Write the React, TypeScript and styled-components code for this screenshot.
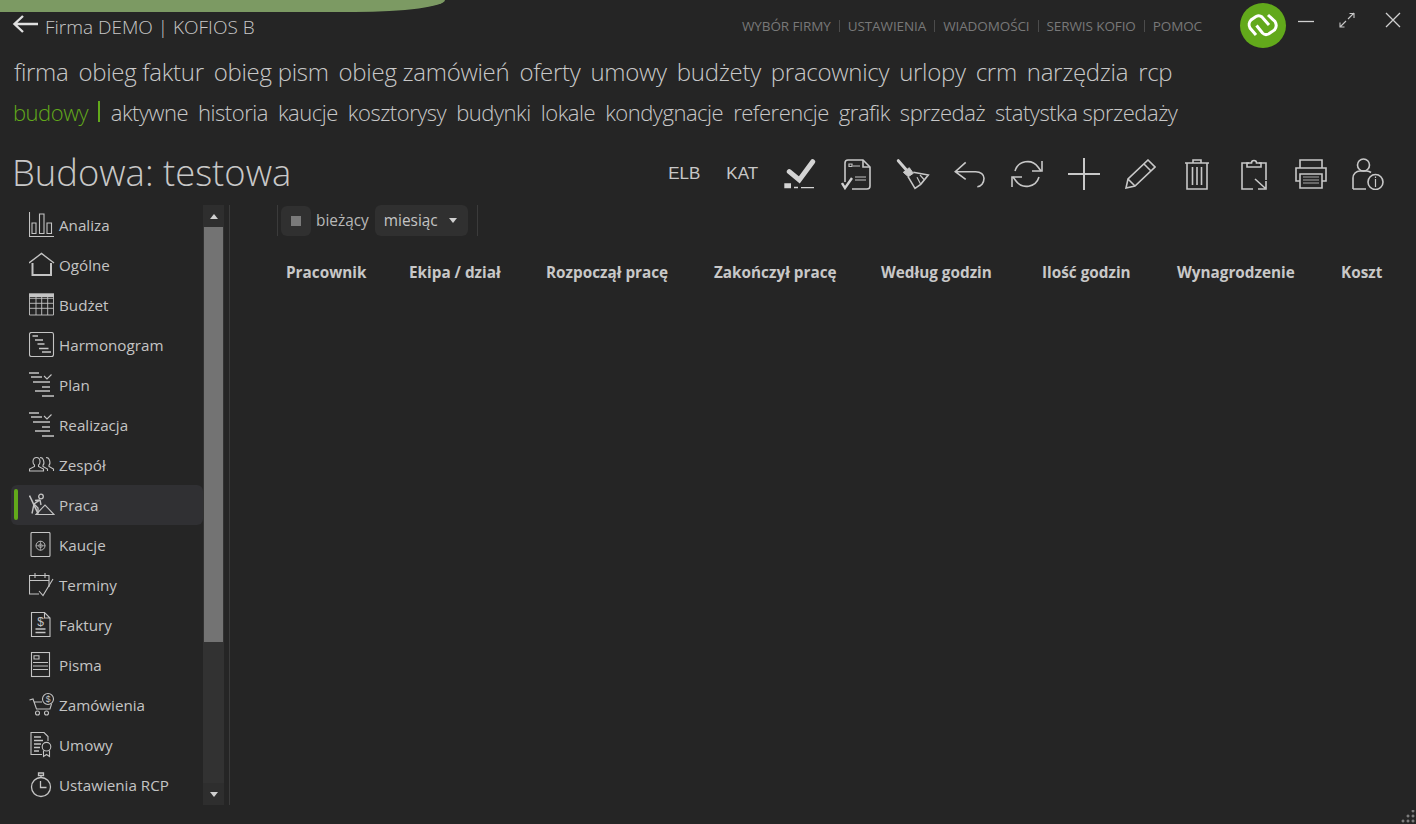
import React from "react";
import styled, { createGlobalStyle } from "styled-components";

const Global = createGlobalStyle`
  html, body {
    margin: 0;
    padding: 0;
    background: #252525;
  }
  * { box-sizing: border-box; }
`;

const Shell = styled.div`
  position: relative;
  width: 1416px;
  height: 824px;
  overflow: hidden;
  background: #252525;
  color: #c4c4c4;
  font-family: "Open Sans", "Noto Sans", sans-serif;
`;

const TopArc = styled.div`
  position: absolute;
  left: -40px;
  top: -60px;
  width: 485px;
  height: 72px;
  background: #7c9a63;
  border-bottom-right-radius: 90px 12px;
`;

const Header = styled.header`
  display: flex;
  align-items: flex-start;
  height: 51px;
  padding: 3px 15px 0 12px;
`;

const Brand = styled.div`
  display: flex;
  align-items: center;
  gap: 7px;
  height: 48px;
  font-size: 19px;
  font-weight: 300;
  color: #c8c8c8;
  flex: 1;
`;

const TopLinks = styled.nav`
  display: flex;
  align-items: center;
  height: 46px;
  font-size: 13.5px;
  letter-spacing: -0.1px;
  color: #787878;
  font-weight: 400;
`;

const TopLink = styled.span`
  white-space: nowrap;
`;

const TopSep = styled.span`
  width: 1px;
  height: 12px;
  background: #4c4c4c;
  margin: 0 8px;
`;

const Logo = styled.div`
  width: 46px;
  height: 45px;
  margin-left: 38px;
  border-radius: 50%;
  background: #62a91b;
`;

const WindowButtons = styled.div`
  display: flex;
  align-items: flex-start;
  margin-left: 12px;
  gap: 25px;
  padding-top: 9px;

  & > svg:last-child {
    margin-left: 5px;
  }
`;

const MenuRow = styled.nav<{ $size: number; $spacing: number; $height: number }>`
  display: flex;
  align-items: center;
  gap: 10px;
  height: ${(p) => p.$height}px;
  padding-left: 14px;
  font-size: ${(p) => p.$size}px;
  font-weight: 300;
  letter-spacing: ${(p) => p.$spacing}px;
  color: #c8c8c8;
  white-space: nowrap;
`;

const Section = styled.span`
  display: flex;
  align-items: center;
  color: #62a91b;
  margin-left: -1px;
  margin-right: 1px;
`;

const SectionBar = styled.span`
  width: 1.5px;
  height: 21px;
  background: #62a91b;
  margin-left: 10px;
`;

const TitleRow = styled.div`
  display: flex;
  align-items: center;
  height: 56px;
  margin: 12px 0 5px;
  padding-left: 12px;
`;

const Title = styled.h1`
  flex: 1;
  margin: 0;
  font-size: 36.4px;
  font-weight: 300;
  color: #c8c8c8;
`;

const Toolbar = styled.div`
  display: flex;
  align-items: center;
  padding-right: 20px;
  padding-top: 4px;
`;

const ToolText = styled.span`
  width: 58px;
  text-align: center;
  font-family: "Liberation Sans", sans-serif;
  font-size: 17px;
  color: #c8c8c8;
`;

const ToolIcon = styled.span`
  width: 56.8px;
  height: 34px;
  display: flex;
  align-items: center;
  justify-content: center;
`;

const Body = styled.div`
  display: flex;
  height: 600px;
`;

const Sidebar = styled.aside`
  display: flex;
  width: 230px;
  padding-left: 11px;
  border-right: 1px solid #3b3b3b;
  margin-right: 47px;
`;

const SideList = styled.ul`
  list-style: none;
  margin: 0;
  padding: 0;
  width: 192px;
`;

const SideItem = styled.li<{ $active?: boolean }>`
  position: relative;
  display: flex;
  align-items: center;
  gap: 4px;
  height: 40px;
  padding-left: 18px;
  font-size: 15.2px;
  color: #c4c4c4;
  border-radius: 6px;
  background: ${(p) => (p.$active ? "#303033" : "transparent")};
`;

const ActiveMark = styled.span`
  position: absolute;
  left: 3px;
  top: 4px;
  width: 4px;
  height: 31px;
  border-radius: 2px;
  background: #62a91b;
`;

const Scrollbar = styled.div`
  display: flex;
  flex-direction: column;
  width: 21px;
  background: #323232;
`;

const ScrollBtn = styled.div`
  height: 22px;
  display: flex;
  align-items: center;
  justify-content: center;
  background: #2e2e2e;
`;

const ScrollThumb = styled.div`
  height: 415px;
  width: 19px;
  margin-left: 1px;
  background: #737373;
`;

const ScrollRest = styled.div`
  flex: 1;
`;

const Arrow = styled.span<{ $up?: boolean }>`
  width: 0;
  height: 0;
  border-left: 4.5px solid transparent;
  border-right: 4.5px solid transparent;
  ${(p) =>
    p.$up
      ? "border-bottom: 5px solid #d0d0d0;"
      : "border-top: 5px solid #d0d0d0;"}
`;

const Main = styled.main`
  flex: 1;
  display: flex;
  flex-direction: column;
`;

const Filters = styled.div`
  display: flex;
  align-items: center;
  height: 31px;
  font-size: 15.4px;
  color: #b8b8b8;
`;

const FilterSep = styled.span`
  width: 1px;
  height: 31px;
  background: #3b3b3b;
`;

const StopButton = styled.span`
  width: 30px;
  height: 30px;
  margin: 1px 5px 0 3px;
  border-radius: 6px;
  background: #303030;
  display: flex;
  align-items: center;
  justify-content: center;
`;

const StopMark = styled.span`
  width: 10px;
  height: 10px;
  background: #7a7a7a;
`;

const Select = styled.span`
  display: flex;
  align-items: center;
  justify-content: space-between;
  width: 93px;
  height: 31px;
  margin: 0 9px 0 6px;
  padding: 0 11px 0 9px;
  border-radius: 6px;
  background: #303030;
  color: #c4c4c4;
`;

const TableHead = styled.div`
  display: grid;
  grid-template-columns: 123px 137px 168px 167px 161px 135px 164px auto;
  margin-top: 24px;
  padding-left: 9px;
  font-size: 15.3px;
  font-weight: 700;
  line-height: 24px;
  color: #c8c8c8;
  white-space: nowrap;
`;

const Grip = styled.svg`
  position: absolute;
  right: 0;
  bottom: 0;
`;

const line = { fill: "none", stroke: "#c8c8c8", strokeWidth: 1.6 };
const thin = { fill: "none", stroke: "#c4c4c4", strokeWidth: 1.2 };

const BackArrow = () => (
  <svg width="26" height="20" viewBox="0 0 26 20" style={{ marginTop: -6 }}>
    <path d="M26 10H3M11 2L2.500 10l8.500 8" fill="none" stroke="#e0e0e0" strokeWidth="2.400" />
  </svg>
);

const LogoMark = () => (
  <svg width="46" height="45" viewBox="0 0 46 45">
    <g fill="none" stroke="#fff" strokeWidth="3">
      <path d="M16 32l-6-7c-1.500-2.500-1-6 1-8l5-3.500c2-1 4.500-.8 6 .5l7 8" />
      <path d="M28 12l7 6.500c1.500 2.500 1.500 6-.5 8.500l-6 4c-2 1-4.500 .5-6-1l-6-7.500" />
    </g>
  </svg>
);

const MinimizeIcon = () => (
  <svg width="16" height="18" viewBox="0 0 16 18">
    <path d="M0 9.500h16" stroke="#d0d0d0" strokeWidth="1.300" />
  </svg>
);

const ExpandIcon = () => (
  <svg width="16" height="16" viewBox="0 0 16 16">
    <g fill="none" stroke="#c8c8c8" strokeWidth="1.100">
      <path d="M9 7l6-6M10.500 1.500h4.500V6" />
      <path d="M7 9l-6 6M1 10.500V15h4.500" />
    </g>
  </svg>
);

const CloseIcon = () => (
  <svg width="16" height="16" viewBox="0 0 16 16">
    <path d="M1 1l14 14M15 1L1 15" stroke="#d0d0d0" strokeWidth="1.300" />
  </svg>
);

const tools = [
  // zaznacz
  <svg key="check" width="32" height="32" viewBox="0 0 32 32">
    <path d="M5.300 13.700l10 8.300L28.700 3.700" fill="none" stroke="#d4d4d4" strokeWidth="5" strokeLinecap="round" />
    <path d="M0.300 25.300H7v5H0.300zM10 28.700h4v1.600h-4zM17 29h13v1.300h-13z" fill="#d4d4d4" />
  </svg>,
  // dokument z ptaszkiem
  <svg key="doc" width="32" height="32" viewBox="0 0 32 32" style={{ marginLeft: 2 }}>
    <path d="M4 24V5a3 3 0 0 1 3-3h15l7 7v19a3 3 0 0 1-3 3H11" {...line} />
    <path d="M22 2v7h7" {...line} />
    <path d="M8 6h3v2.500H8zM12 8h7M14 19h11M14 22h11" {...thin} />
    <path d="M1 25l3 5 7-10" fill="none" stroke="#d0d0d0" strokeWidth="2.400" />
  </svg>,
  // miotla
  <svg key="broom" width="34" height="32" viewBox="0 0 34 32">
    <path d="M2.300 2.700l9 10.300" fill="none" stroke="#d0d0d0" strokeWidth="3" strokeLinecap="round" />
    <path d="M7.300 14.300l6-4.600 4 5.600-5 3.400z" fill="#c8c8c8" stroke="#c8c8c8" strokeWidth="1" />
    <path d="M12 18.700l7 11.600 5.700-4 7.600-9.300-15-2.700" {...line} />
    <path d="M24.700 26.300l-3.700-7M28.500 22l-4.500-5" {...thin} />
  </svg>,
  // cofnij
  <svg key="undo" width="32" height="28" viewBox="0 0 32 28">
    <path d="M11.700 2.300L1.300 11.700l10.400 7.600M1.300 11.700h20.400c5 0 8.300 2.800 8.300 6.600 0 4.700-3 8.400-6.700 8.400" {...line} />
  </svg>,
  // odswiez
  <svg key="refresh" width="32" height="30" viewBox="0 0 32 30">
    <path d="M4 12A13 13 0 0 1 27 8l3 4M28 18A13 13 0 0 1 5 22l-3-4" {...line} />
    <path d="M31 2v10H21M1 28V18h10" {...line} />
  </svg>,
  // dodaj
  <svg key="plus" width="32" height="32" viewBox="0 0 32 32">
    <path d="M0 16h32M16 0v32" fill="none" stroke="#c8c8c8" strokeWidth="2" />
  </svg>,
  // edytuj
  <svg key="pencil" width="32" height="30" viewBox="0 0 32 30">
    <path d="M24 1l7 7L11 27l-9 2 2-9zM4 20l7 7M20 5l7 7" {...line} />
  </svg>,
  // usun
  <svg key="trash" width="24" height="31" viewBox="0 0 24 31">
    <path d="M0 4h24M8 4V1h8v3M2 4v26h20V4M7.500 8v18M12 8v18M16.500 8v18" {...line} />
  </svg>,
  // wklej
  <svg key="paste" width="26" height="32" viewBox="0 0 26 32">
    <path d="M8 5H1v26h11M18 5h7v17" {...line} />
    <path d="M6 9V5h4.500a2.500 2.500 0 0 1 5 0H20v4z" {...line} />
    <path d="M14 21l10 9M25 23v8h-8" {...line} />
  </svg>,
  // drukuj
  <svg key="print" width="32" height="30" viewBox="0 0 32 30">
    <path d="M5 9V1h22v8" {...line} />
    <path d="M5 22H1V9h30v13h-4" {...line} />
    <path d="M5 15h22v14H5z" {...line} />
    <path d="M8 18h16M8 21h16M8 24h16" fill="none" stroke="#aaa" strokeWidth="1.200" />
  </svg>,
  // profil info
  <svg key="info" width="32" height="32" viewBox="0 0 32 32">
    <circle cx="11.500" cy="7" r="6" {...line} />
    <path d="M1 31V20a7 7 0 0 1 7-7h7a7 7 0 0 1 4 1.500M1 31h13" {...line} />
    <circle cx="23.500" cy="24" r="7.500" {...line} />
    <path d="M23.500 21v8M23.500 18.500v1.500" fill="none" stroke="#c8c8c8" strokeWidth="1.200" />
  </svg>,
];

const S = ({ children }: { children: React.ReactNode }) => (
  <svg width="26" height="26" viewBox="0 0 26 26" style={{ flexShrink: 0 }}>
    {children}
  </svg>
);

const si = { fill: "none", stroke: "#c4c4c4", strokeWidth: 1.1 };

const Plan = () => (
  <S>
    <path d="M0 1h10M2 5h11M4 10h17M13 15h8M6 19h15M13 24h12" {...si} strokeWidth={1.300} />
    <path d="M15 4l3 3 4.500-4.500" {...si} />
  </S>
);

const sideIcons: Record<string, React.ReactNode> = {
  Analiza: (
    <S>
      <path d="M0.500 0v24.500H25M3 11h4v10.500H3zM10.500 2H15v19.500h-4.500zM18 11h4.500v10.500H18z" {...si} />
    </S>
  ),
  "Ogólne": (
    <S>
      <path d="M0 11L12.500 1.500 25 11" {...si} strokeWidth={1.400} />
      <path d="M3.500 11v12H22V11" {...si} strokeWidth={2} />
    </S>
  ),
  "Budżet": (
    <S>
      <path d="M0 1.300h25V5H0z" fill="#c4c4c4" />
      <path d="M0.500 5v18h24V5M0.500 6.300h24M0.500 11.300h24M0.500 16.300h24M7 5v18M12.700 5v18M18.700 5v18" {...si} strokeWidth={0.900} />
    </S>
  ),
  Harmonogram: (
    <S>
      <rect x="0.500" y="0.500" width="24" height="24" rx="2" {...si} />
      <path d="M3.500 4H9M6 8h8M8.500 12h7M10 16.500h9.500M13 20h9" {...si} strokeWidth={1.400} />
    </S>
  ),
  Plan: <Plan />,
  Realizacja: <Plan />,
  Zespół: (
    <S>
      <path d="M0.500 19v-2l5-2.500V13c-2-1-2.500-7.500 2-7.500s4 6.500 2 7.500v1.500l5 2.500v2z" {...si} />
      <path d="M11 5.700c3.500-1 5 5.500 3 7.500v1.300l4.500 2.500V19" {...si} />
      <path d="M17 5.700c3.500-1 5 5.500 3 7.500v1.300l4.500 2.500V19" {...si} />
    </S>
  ),
  Praca: (
    <S>
      <circle cx="12" cy="4.500" r="2.300" {...si} strokeWidth={1.300} />
      <path d="M0.500 3.500L9 21.500" {...si} strokeWidth={1.600} />
      <path d="M11 8L5 12l-2 9.500M11 8l-5 .5M5 12l4 4v5.500M11 8l1 5" {...si} strokeWidth={1.400} />
      <path d="M7 22.500L16 13l9 9.500z" {...si} />
    </S>
  ),
  Kaucje: (
    <S>
      <rect x="2" y="0.500" width="19" height="24" rx="1" {...si} />
      <circle cx="11.500" cy="13.700" r="4.500" {...si} strokeWidth={0.900} />
      <circle cx="11.500" cy="13.700" r="1.800" {...si} strokeWidth={0.700} />
      <path d="M11.500 9v9.500M6.800 13.700h9.500" {...si} strokeWidth={0.600} />
    </S>
  ),
  Terminy: (
    <S>
      <path d="M10 22H0.500V3.500H20V15M0.500 8.500H20M6 1v5M16 1v5" {...si} />
      <path d="M10 19l4 4.500L24 7" {...si} />
    </S>
  ),
  Faktury: (
    <S>
      <path d="M2.500 24.500V0.500h13l5.500 5.500v18.500zM15.500 0.500V6H21" {...si} />
      <text x="11.500" y="13.500" fontSize="12" textAnchor="middle" fill="#c4c4c4" fontFamily="Liberation Sans, sans-serif">$</text>
      <path d="M6.500 17h10M6.500 20.500h10" {...si} strokeWidth={1.500} />
    </S>
  ),
  Pisma: (
    <S>
      <rect x="2.500" y="0.500" width="18" height="24" {...si} />
      <path d="M5 3.700h5V7H5zM4 10.500h15M4 14h15M4 17.500h15" {...si} />
    </S>
  ),
  "Zamówienia": (
    <S>
      <path d="M0.500 8l3.500-1 3.500 10H21l1.500-5M5 10h8" {...si} />
      <circle cx="8.500" cy="21" r="2" {...si} />
      <circle cx="17.500" cy="21" r="2" {...si} />
      <circle cx="19" cy="7" r="5.500" {...si} />
      <text x="19" y="10" fontSize="8.500" textAnchor="middle" fill="#c4c4c4" fontFamily="Liberation Sans, sans-serif">$</text>
    </S>
  ),
  Umowy: (
    <S>
      <path d="M13 22.500H2V0.500h13l4 4V9" {...si} />
      <path d="M5 5h7M5 8.500h9M5 12h7M5 15.500h6M5 19h5" {...si} strokeWidth={1.300} />
      <circle cx="17.500" cy="14.700" r="4.300" {...si} />
      <path d="M14.500 18.500v6l3-2 3 2v-6" {...si} />
    </S>
  ),
  "Ustawienia RCP": (
    <S>
      <circle cx="12" cy="15" r="9.500" {...si} strokeWidth={1.300} />
      <path d="M11.500 9v6.500h6" {...si} strokeWidth={1.300} />
      <path d="M9.500 1h5v2.500h-5zM12 3.500v2" {...si} strokeWidth={1.300} />
    </S>
  ),
};

const row1 = ["firma", "obieg faktur", "obieg pism", "obieg zamówień", "oferty", "umowy", "budżety", "pracownicy", "urlopy", "crm", "narzędzia", "rcp"];
const row2 = ["aktywne", "historia", "kaucje", "kosztorysy", "budynki", "lokale", "kondygnacje", "referencje", "grafik", "sprzedaż", "statystka sprzedaży"];
const topLinks = ["WYBÓR FIRMY", "USTAWIENIA", "WIADOMOŚCI", "SERWIS KOFIO", "POMOC"];
const sideItems = ["Analiza", "Ogólne", "Budżet", "Harmonogram", "Plan", "Realizacja", "Zespół", "Praca", "Kaucje", "Terminy", "Faktury", "Pisma", "Zamówienia", "Umowy", "Ustawienia RCP"];
const columns = ["Pracownik", "Ekipa / dział", "Rozpoczął pracę", "Zakończył pracę", "Według godzin", "Ilość godzin", "Wynagrodzenie", "Koszt"];
const gripDots = [[13, 1], [8, 6], [13, 6], [3, 11], [8, 11], [13, 11]];

export default function App() {
  return (
    <Shell>
      <Global />
      <TopArc />
      <Header>
        <Brand>
          <BackArrow />
          <span>Firma DEMO | KOFIOS B</span>
        </Brand>
        <TopLinks>
          {topLinks.map((l, i) => (
            <React.Fragment key={l}>
              {i > 0 && <TopSep />}
              <TopLink>{l}</TopLink>
            </React.Fragment>
          ))}
        </TopLinks>
        <Logo>
          <LogoMark />
        </Logo>
        <WindowButtons>
          <MinimizeIcon />
          <ExpandIcon />
          <CloseIcon />
        </WindowButtons>
      </Header>
      <MenuRow $size={24} $spacing={-0.29} $height={40}>
        {row1.map((m) => (
          <span key={m}>{m}</span>
        ))}
      </MenuRow>
      <MenuRow $size={22} $spacing={-0.48} $height={41}>
        <Section>
          budowy
          <SectionBar />
        </Section>
        {row2.map((m) => (
          <span key={m}>{m}</span>
        ))}
      </MenuRow>
      <TitleRow>
        <Title>Budowa: testowa</Title>
        <Toolbar>
          <ToolText>ELB</ToolText>
          <ToolText>KAT</ToolText>
          {tools.map((t) => (
            <ToolIcon key={t.key}>{t}</ToolIcon>
          ))}
        </Toolbar>
      </TitleRow>
      <Body>
        <Sidebar>
          <SideList>
            {sideItems.map((s) => (
              <SideItem key={s} $active={s === "Praca"}>
                {s === "Praca" && <ActiveMark />}
                {sideIcons[s]}
                {s}
              </SideItem>
            ))}
          </SideList>
          <Scrollbar>
            <ScrollBtn>
              <Arrow $up />
            </ScrollBtn>
            <ScrollThumb />
            <ScrollRest />
            <ScrollBtn>
              <Arrow />
            </ScrollBtn>
          </Scrollbar>
        </Sidebar>
        <Main>
          <Filters>
            <FilterSep />
            <StopButton>
              <StopMark />
            </StopButton>
            bieżący
            <Select>
              miesiąc
              <Arrow />
            </Select>
            <FilterSep />
          </Filters>
          <TableHead>
            {columns.map((c) => (
              <span key={c}>{c}</span>
            ))}
          </TableHead>
        </Main>
      </Body>
      <Grip width="16" height="14" viewBox="0 0 16 14">
        {gripDots.map(([x, y]) => (
          <path key={`${x}-${y}`} d={`M${x - 1.5} ${y}h3M${x} ${y - 1.5}v3`} stroke="#9a9a9a" strokeWidth="1" />
        ))}
      </Grip>
    </Shell>
  );
}
